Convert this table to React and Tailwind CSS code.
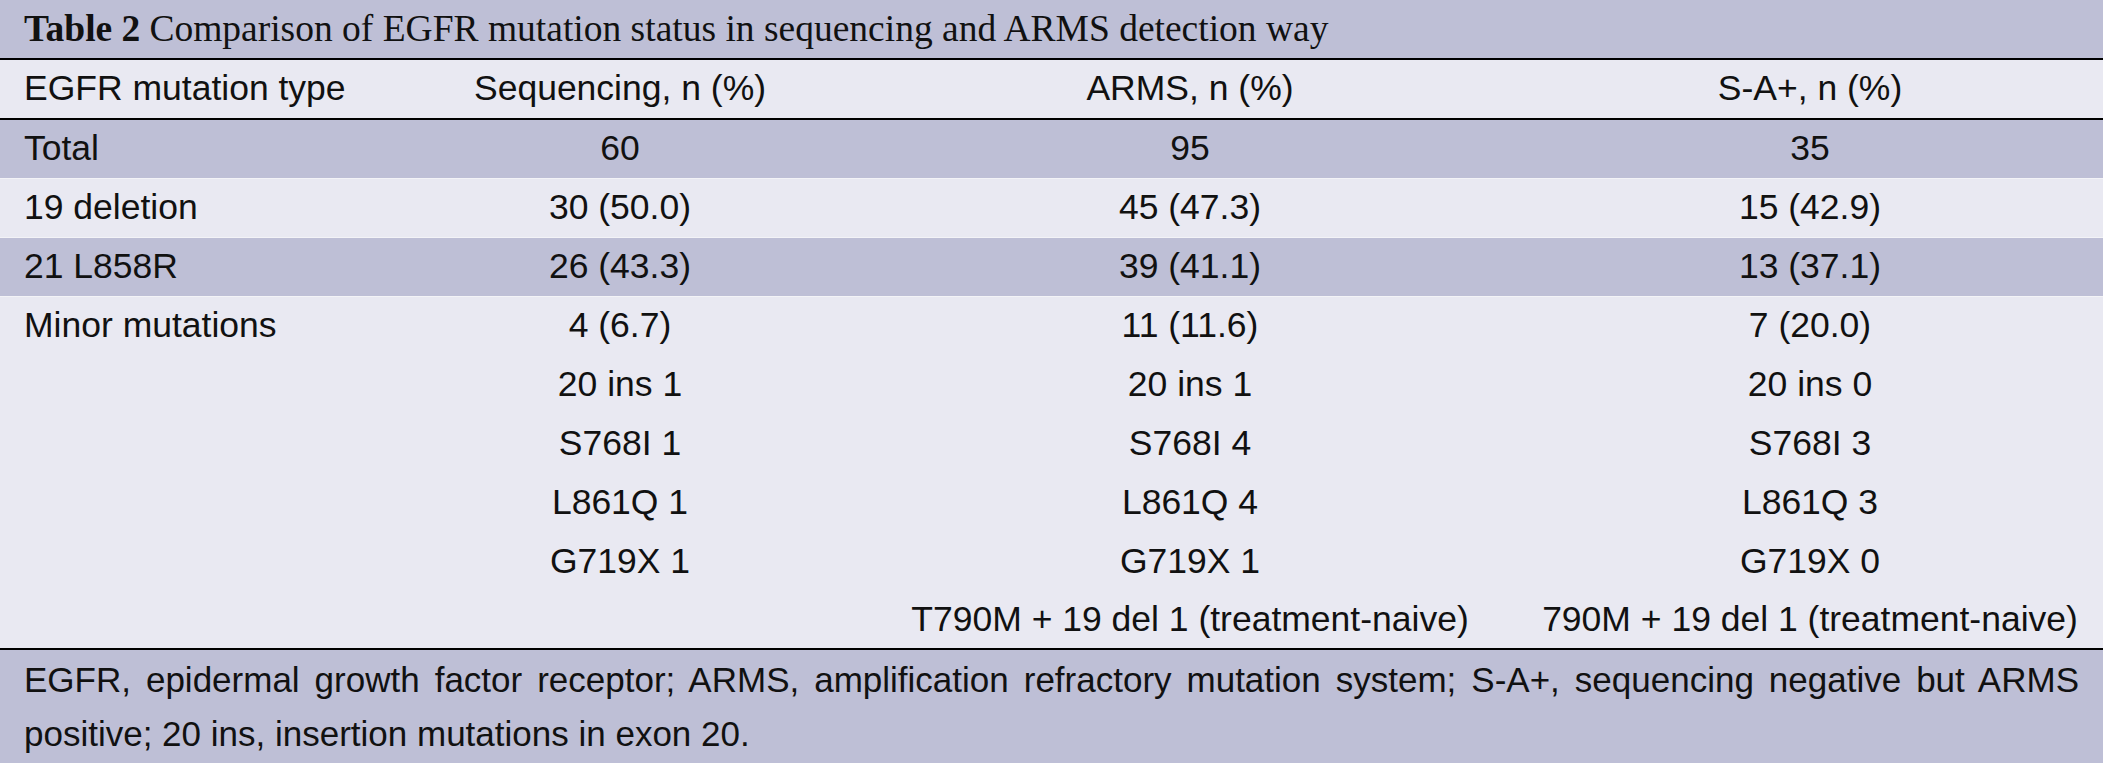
import React from "react";

const rows = [
  { label: "Total", seq: "60", arms: "95", sa: "35", dark: true },
  { label: "19 deletion", seq: "30 (50.0)", arms: "45 (47.3)", sa: "15 (42.9)" },
  { label: "21 L858R", seq: "26 (43.3)", arms: "39 (41.1)", sa: "13 (37.1)", dark: true },
  { label: "Minor mutations", seq: "4 (6.7)", arms: "11 (11.6)", sa: "7 (20.0)" },
  { label: "", seq: "20 ins 1", arms: "20 ins 1", sa: "20 ins 0" },
  { label: "", seq: "S768I 1", arms: "S768I 4", sa: "S768I 3" },
  { label: "", seq: "L861Q 1", arms: "L861Q 4", sa: "L861Q 3" },
  { label: "", seq: "G719X 1", arms: "G719X 1", sa: "G719X 0" },
  {
    label: "",
    seq: "",
    arms: "T790M + 19 del 1 (treatment-naive)",
    sa: "790M + 19 del 1 (treatment-naive)",
    last: true,
  },
];

const App = () => {
  return (
    <div className="w-[2103px] h-[763px] bg-[#e9e9f2] text-[#111] overflow-hidden font-['Liberation_Sans',Arial,sans-serif]">
      <div className="h-[60px] bg-[#bebfd6] border-b-2 border-black px-6 flex items-center font-['Liberation_Serif','Times_New_Roman',serif] text-[37.5px] leading-none">
        <span className="font-bold mr-[9px]">Table 2</span>
        <span>Comparison of EGFR mutation status in sequencing and ARMS detection way</span>
      </div>

      <table className="w-full table-fixed border-collapse text-[35.5px]">
        <colgroup>
          <col className="w-[377px]" />
          <col className="w-[486px]" />
          <col className="w-[654px]" />
          <col />
        </colgroup>
        <thead>
          <tr className="h-[59px] bg-[#e9e9f2] border-b-2 border-black">
            <th className="font-normal text-left pl-6">EGFR mutation type</th>
            <th className="font-normal text-center">Sequencing, n (%)</th>
            <th className="font-normal text-center">ARMS, n (%)</th>
            <th className="font-normal text-center">S-A+, n (%)</th>
          </tr>
        </thead>
        <tbody>
          {rows.map((r, i) => (
            <tr
              key={i}
              className={`${r.last ? "h-[57px]" : "h-[59px]"} ${
                r.dark ? "bg-[#bebfd6]" : "bg-[#e9e9f2]"
              } ${i < 3 ? "border-b border-[#f3f3f7]" : ""}`}
            >
              <td className="text-left pl-6 whitespace-nowrap">{r.label}</td>
              <td className="text-center whitespace-nowrap">{r.seq}</td>
              <td className="text-center whitespace-nowrap">{r.arms}</td>
              <td className="text-center whitespace-nowrap">{r.sa}</td>
            </tr>
          ))}
        </tbody>
      </table>

      <div className="border-t-2 border-black bg-[#bebfd6] h-full px-6 pt-[3px] text-[35px] leading-[54px] text-justify">
        EGFR, epidermal growth factor receptor; ARMS, amplification refractory mutation system; S-A+, sequencing negative but ARMS positive; 20 ins, insertion mutations in exon 20.
      </div>
    </div>
  );
};

export default App;
